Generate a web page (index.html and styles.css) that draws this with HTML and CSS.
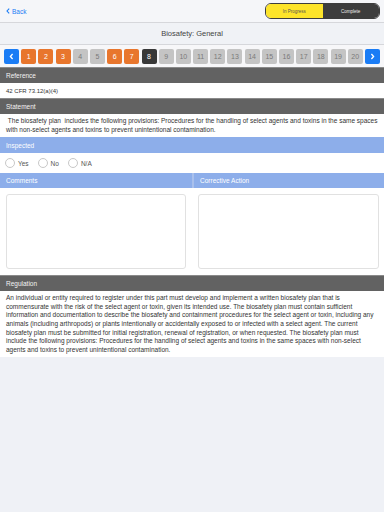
FILE: index.html
```html
<!DOCTYPE html>
<html lang="en">

<head>
    <meta charset="UTF-8">
    <meta name="viewport" content="width=device-width, initial-scale=1.0">
    <title>Biosafety: General</title>
    <link rel="stylesheet" href="styles.css">
</head>

<body>
    <header class="topbar">
        <a class="back" href="#">
            <svg width="4" height="6" viewBox="0 0 4 6"><path d="M3.2 0.6 L1 3 L3.2 5.4" fill="none" stroke="#1a7cf5" stroke-width="1.1"/></svg>
            Back
        </a>
        <div class="segment">
            <span class="seg seg-on">In Progress</span>
            <span class="seg seg-off">Complete</span>
        </div>
    </header>

    <div class="title">Biosafety: General</div>

    <nav class="pager">
        <button class="page arrow">
            <svg width="5" height="7" viewBox="0 0 5 7"><path d="M3.6 1 L1.4 3.5 L3.6 6" fill="none" stroke="#fff" stroke-width="1.3"/></svg>
        </button>
        <button class="page done">1</button>
        <button class="page done">2</button>
        <button class="page done">3</button>
        <button class="page">4</button>
        <button class="page">5</button>
        <button class="page done">6</button>
        <button class="page done">7</button>
        <button class="page current">8</button>
        <button class="page">9</button>
        <button class="page">10</button>
        <button class="page">11</button>
        <button class="page">12</button>
        <button class="page">13</button>
        <button class="page">14</button>
        <button class="page">15</button>
        <button class="page">16</button>
        <button class="page">17</button>
        <button class="page">18</button>
        <button class="page">19</button>
        <button class="page">20</button>
        <button class="page arrow">
            <svg width="5" height="7" viewBox="0 0 5 7"><path d="M1.4 1 L3.6 3.5 L1.4 6" fill="none" stroke="#fff" stroke-width="1.3"/></svg>
        </button>
    </nav>

    <div class="bar dark">Reference</div>
    <div class="row">42 CFR 73.12(a)(4)</div>

    <div class="bar dark">Statement</div>
    <div class="text statement">&nbsp;The biosafety plan&nbsp; includes the following provisions: Procedures for the handling of select agents and toxins in the same spaces with non-select agents and toxins to prevent unintentional contamination.</div>

    <div class="bar blue">Inspected</div>
    <div class="radios">
        <label class="radio"><span class="circle"></span>Yes</label>
        <label class="radio"><span class="circle"></span>No</label>
        <label class="radio"><span class="circle"></span>N/A</label>
    </div>

    <div class="split">
        <div class="col">
            <div class="bar blue">Comments</div>
            <div class="box"><textarea></textarea></div>
        </div>
        <div class="col">
            <div class="bar blue divided">Corrective Action</div>
            <div class="box"><textarea></textarea></div>
        </div>
    </div>

    <div class="bar dark">Regulation</div>
    <div class="text regulation">An individual or entity required to register under this part must develop and implement a written biosafety plan that is commensurate with the risk of the select agent or toxin, given its intended use. The biosafety plan must contain sufficient information and documentation to describe the biosafety and containment procedures for the select agent or toxin, including any animals (including arthropods) or plants intentionally or accidentally exposed to or infected with a select agent. The current biosafety plan must be submitted for initial registration, renewal of registration, or when requested. The biosafety plan must include the following provisions: Procedures for the handling of select agents and toxins in the same spaces with non-select agents and toxins to prevent unintentional contamination.</div>
</body>

</html>
```

FILE: styles.css
```css
body {
    margin: 0;
    height: 512px;
    background: #eff1f6;
    font-family: "Liberation Sans", Arial, sans-serif;
    color: #333;
}

.topbar {
    height: 22px;
    display: flex;
    justify-content: space-between;
    align-items: center;
    padding: 0 4px 0 6px;
    background: #f5f6f9;
    border-bottom: 1px solid #d6d7db;
}

.back {
    display: flex;
    align-items: center;
    gap: 2px;
    color: #1a7cf5;
    font-size: 6.5px;
    text-decoration: none;
}

.segment {
    display: flex;
    width: 113px;
    height: 14px;
    border: 1px solid #3d3d3d;
    border-radius: 6px;
    overflow: hidden;
    font-size: 4.5px;
}

.seg {
    flex: 1;
    display: flex;
    justify-content: center;
    align-items: center;
}

.seg-on {
    background: #fde42a;
    color: #555;
}

.seg-off {
    background: #3d3d3d;
    color: #eee;
}

.title {
    height: 21px;
    display: flex;
    justify-content: center;
    align-items: center;
    background: #f0f2f6;
    border-bottom: 1px solid #d6d7db;
    font-size: 7.5px;
    color: #444;
}

.pager {
    height: 22px;
    display: flex;
    justify-content: space-between;
    align-items: center;
    padding: 0 4px;
    background: #f7f7f9;
}

.page {
    width: 15px;
    height: 15px;
    padding: 0;
    border: 0;
    border-radius: 2px;
    background: #c4c4c4;
    color: #7a7a7a;
    font-family: inherit;
    font-size: 7px;
    display: flex;
    justify-content: center;
    align-items: center;
}

.page.done {
    background: #e8762d;
    color: #fff;
}

.page.current {
    background: #383838;
    color: #fff;
}

.page.arrow {
    background: #1a7cf5;
}

.bar {
    height: 16px;
    display: flex;
    align-items: center;
    padding: 0 6px;
    font-size: 6.5px;
    color: #f2f2f2;
}

.bar.dark {
    background: #626262;
    border-top: 1px solid #8a8a8a;
    height: 15px;
}

.bar.blue {
    background: #8daeea;
    color: #fff;
}

.row {
    height: 15px;
    display: flex;
    align-items: center;
    padding: 0 6px;
    background: #fff;
    font-size: 6px;
}

.text {
    background: #fff;
    padding: 3px 6px;
    font-size: 6.5px;
    line-height: 8.6px;
}

.regulation {
    padding: 3px 6px 3px;
}

.radios {
    height: 20px;
    display: flex;
    align-items: center;
    gap: 9px;
    padding: 0 5px;
    background: #fff;
    font-size: 6.5px;
    color: #555;
}

.radio {
    display: flex;
    align-items: center;
    gap: 3px;
}

.circle {
    width: 8px;
    height: 8px;
    border: 1px solid #c8c8c8;
    border-radius: 50%;
}

.split {
    display: flex;
    background: #fff;
}

.col {
    flex: 1;
}

.col .bar {
    height: 15px;
}

.bar.divided {
    border-left: 2px solid #a9c0ec;
}

.box {
    padding: 6px;
    height: 75px;
}

.col + .col .box {
    padding-left: 6px;
    padding-right: 5px;
}

.box textarea {
    display: block;
    box-sizing: border-box;
    width: 100%;
    height: 100%;
    margin: 0;
    border: 1px solid #e1e1e1;
    border-radius: 3px;
    resize: none;
    background: #fff;
}
```
